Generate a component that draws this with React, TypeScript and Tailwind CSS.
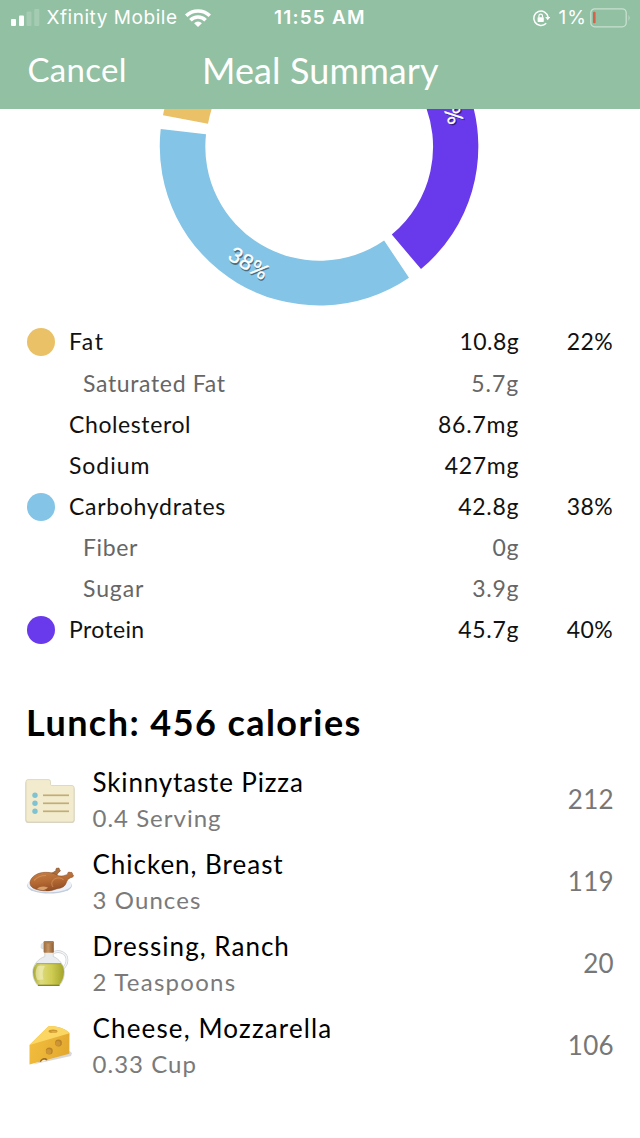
import React from "react";
import clsx from "clsx";

type Nutrient = {
  label: string;
  labelTracking: string;
  amount: string;
  amountTracking: string;
  percent?: string;
  dot?: string;
  sub?: boolean;
};

const nutrients: Nutrient[] = [
  { label: "Fat", labelTracking: "tracking-[1.5px]", amount: "10.8g", amountTracking: "tracking-[0.4px]", percent: "22%", dot: "bg-[#ebc168]" },
  { label: "Saturated Fat", labelTracking: "tracking-[0.65px]", amount: "5.7g", amountTracking: "tracking-[0.9px]", sub: true },
  { label: "Cholesterol", labelTracking: "tracking-[0.6px]", amount: "86.7mg", amountTracking: "tracking-[0.8px]" },
  { label: "Sodium", labelTracking: "tracking-[0.95px]", amount: "427mg", amountTracking: "tracking-[0.65px]" },
  { label: "Carbohydrates", labelTracking: "tracking-[0.7px]", amount: "42.8g", amountTracking: "tracking-[0.65px]", percent: "38%", dot: "bg-[#84c4e6]" },
  { label: "Fiber", labelTracking: "tracking-[0.65px]", amount: "0g", amountTracking: "tracking-[0.65px]", sub: true },
  { label: "Sugar", labelTracking: "tracking-[0.88px]", amount: "3.9g", amountTracking: "tracking-[0.65px]", sub: true },
  { label: "Protein", labelTracking: "tracking-[0.35px]", amount: "45.7g", amountTracking: "tracking-[0.65px]", percent: "40%", dot: "bg-[#693aeb]" },
];

function RecipeIcon() {
  return (
    <svg className="h-[82px] w-[60px] shrink-0" viewBox="0 0 60 82">
      <path d="M7.5 22h20a2 2 0 0 1 2 2v2.5q0 1.2 1.2 1.2h21.8a2 2 0 0 1 2 2v32a2 2 0 0 1-2 2h-45a2 2 0 0 1-2-2v-37.700a2 2 0 0 1 2-2z" fill="#bdb9a6" opacity=".8" />
      <path d="M8 20.600h20.500a2 2 0 0 1 2 2v2.700q0 1.200 1.200 1.200h20.300a2 2 0 0 1 2 2v32.500a2 2 0 0 1-2 2h-44a2 2 0 0 1-2-2v-38.400a2 2 0 0 1 2-2z" fill="#f2ebcd" stroke="#d9d2b5" strokeWidth=".8" />
      {[36.3, 44.3, 52.3].map((y) => (
        <g key={y}>
          <circle cx="15" cy={y} r="2.700" fill="#7fc3d2" />
          <path d={`M23 ${y}h26`} stroke="#c2ac78" strokeWidth="1.700" />
        </g>
      ))}
    </svg>
  );
}

function ChickenIcon() {
  return (
    <svg className="h-[82px] w-[60px] shrink-0" viewBox="0 0 60 82">
      <defs>
        <linearGradient id="roast" x1="0" y1="0" x2="0.3" y2="1">
          <stop offset="0" stopColor="#c58045" />
          <stop offset=".55" stopColor="#b56a33" />
          <stop offset="1" stopColor="#945026" />
        </linearGradient>
      </defs>
      <ellipse cx="29.500" cy="44.600" rx="22.500" ry="8" fill="#c3cddd" />
      <ellipse cx="29.500" cy="43.800" rx="22" ry="7.400" fill="#edf1f8" />
      <path d="M27 34c3-1.500 6-2 9-4.500c-.5-1.700.4-2.700 1.600-2.300c1-.6 2 0 1.800 1.200c1.300.5 1.300 2-.2 2.500c-1.600 1.200-2 3-4 5z" fill="#a9713f" stroke="#7b4521" strokeWidth=".5" />
      <path d="M10 42c0-5 5.500-9.500 12.500-10.500c8-.8 12 1.200 16 3.200c4 1 6.500-.6 9.200-1.300c-.5-2 1.200-3 2.400-1.900c1.500-.6 2.800.3 2.200 1.800c1.600.4 1.600 2.300 0 2.900c-2.300.5-4.800 1.800-5.800 4.800c-1.300 5-5 6-10 6.900c-4 1.600-7.500 2.300-12.500 1.900c-8-.6-14-2.900-14-7.800z" fill="url(#roast)" stroke="#83431d" strokeWidth=".5" />
      <path d="M33 46c-3-4 0-8.500 4.500-9c3-.2 5 .5 6 2" fill="none" stroke="#d3935a" strokeWidth=".8" />
      <path d="M14 39.500c3-3.500 7-5 12-5" fill="none" stroke="#dc9d61" strokeWidth="1.200" opacity=".6" />
      <path d="M17 48c3-3 7-3 11-1.500c-2 2.500-6 3.500-11 1.500z" fill="#d9a069" />
    </svg>
  );
}

function OilIcon() {
  return (
    <svg className="h-[82px] w-[60px] shrink-0" viewBox="0 0 60 82">
      <defs>
        <linearGradient id="oil" x1="0" y1="0" x2="1" y2="0">
          <stop offset="0" stopColor="#a4a52f" />
          <stop offset=".25" stopColor="#dedb80" />
          <stop offset=".6" stopColor="#cfcc52" />
          <stop offset="1" stopColor="#a3a42c" />
        </linearGradient>
        <linearGradient id="cork" x1="0" y1="0" x2="1" y2="0">
          <stop offset="0" stopColor="#9c6a3e" />
          <stop offset=".45" stopColor="#c49462" />
          <stop offset="1" stopColor="#8f5c34" />
        </linearGradient>
      </defs>
      <path d="M33.500 29.500c7-2.500 13.500 1 13.500 7.300c0 4-1.500 6.500-4 8.500" fill="none" stroke="#c9cdd2" strokeWidth="2.600" />
      <path d="M33.500 29.500c7-2.500 13.500 1 13.500 7.300c0 4-1.500 6.500-4 8.500" fill="none" stroke="#f3f5f7" strokeWidth="1.400" />
      <path d="M24.800 25.500v8c-6 2-12 8-12 15.500c0 6 2 10 5 13.500h21.500c3-3.500 5-7.500 5-13.500c0-7.500-6-13.500-11-15.500v-8z" fill="#e9edef" stroke="#c3c8ca" strokeWidth=".7" />
      <path d="M16.500 40.500h24.500c2 2.300 3 4.800 3 8.300c0 5.700-2 10-5 13.500h-21c-3-3.500-5-7.800-5-13.500c0-3.500 1.500-6 3.500-8.300z" fill="url(#oil)" />
      <path d="M16.500 40.700h24.500" stroke="#9da334" strokeWidth=".9" />
      <path d="M18 43c-3 4-3 9.500-.5 14l6-.5c-1.500-4.500-1-9.500 1.500-13.500z" fill="#f4f3c3" opacity=".55" />
      <path d="M18 62.300h21.500" stroke="#777c25" strokeWidth="1.200" />
      <path d="M21 25c.2-3-.4-4.500 2.200-4.500v5.500z" fill="#e4e7ea" stroke="#c4c8cc" strokeWidth=".5" />
      <rect x="23.600" y="18.300" width="10.200" height="11.500" rx="1" fill="url(#cork)" />
      <ellipse cx="28.700" cy="19.200" rx="5.100" ry="1.200" fill="#a87a4c" />
    </svg>
  );
}

function CheeseIcon() {
  return (
    <svg className="h-[82px] w-[60px] shrink-0" viewBox="0 0 60 82">
      <defs>
        <linearGradient id="rind" x1="0" y1="0" x2="1" y2="0.3">
          <stop offset="0" stopColor="#f3c040" />
          <stop offset="1" stopColor="#e4aa30" />
        </linearGradient>
      </defs>
      <path d="M13 59.500l38-8.500l1-3l-5-4z" fill="#c9c7c4" opacity=".7" />
      <path d="M9.500 40l18.700-18.500c8-.8 16 1.300 21.300 6.700l-.2 20.500l-39.800 10.800z" fill="url(#rind)" />
      <path d="M9.500 40l18.700-18.500c8-.8 16 1.300 21.300 6.700z" fill="#fbd662" />
      <ellipse cx="33" cy="26.300" rx="4.500" ry="1.800" fill="#c9952f" />
      <ellipse cx="34" cy="26.900" rx="3" ry="1" fill="#e0ad43" />
      <circle cx="38.500" cy="38" r="3.400" fill="#b98427" />
      <circle cx="37.900" cy="38.500" r="2.500" fill="#cd9536" />
      <circle cx="29.300" cy="46" r="3.500" fill="#b98427" />
      <circle cx="28.700" cy="46.500" r="2.600" fill="#cd9536" />
      <path d="M19.800 57c0-4 6.700-5.800 7.700-2.100l-1.600.6c-1.500-1.700-4-.6-4.600 1.200z" fill="#a06e22" />
      <path d="M21.300 57.200c.5-2.600 3.500-3.400 4.800-1.500z" fill="#f3eee4" />
    </svg>
  );
}

const foods = [
  { name: "Skinnytaste Pizza", nameClass: "tracking-[0.85px]", serving: "0.4 Serving", servingClass: "tracking-[1px]", calories: "212", Icon: RecipeIcon },
  { name: "Chicken, Breast", nameClass: "tracking-[0.98px]", serving: "3 Ounces", servingClass: "tracking-[1.1px]", calories: "119", Icon: ChickenIcon },
  { name: "Dressing, Ranch", nameClass: "tracking-[1.03px]", serving: "2 Teaspoons", servingClass: "tracking-[1.25px]", calories: "20", Icon: OilIcon },
  { name: "Cheese, Mozzarella", nameClass: "tracking-[1.14px]", serving: "0.33 Cup", servingClass: "tracking-[1.03px]", calories: "106", Icon: CheeseIcon },
];

function StatusBar() {
  return (
    <div className="grid h-[36px] grid-cols-[263px_92px_1fr] items-center pl-[11px] pr-[9px] font-[Inter,sans-serif] text-[19px] leading-[36px]">
      <div className="flex items-center">
        <svg className="h-[18px] w-[29px]" viewBox="0 0 29 18" fill="#fff">
          <rect x="0" y="10" width="5" height="7" rx="1" />
          <rect x="8" y="6.500" width="5" height="10.500" rx="1" />
          <rect x="15.500" y="2.500" width="5" height="14.500" rx="1" opacity=".18" />
          <rect x="23.300" y="0" width="5" height="17" rx="1" opacity=".18" />
        </svg>
        <span className="ml-[6.5px] whitespace-nowrap tracking-[0.54px]">Xfinity Mobile</span>
        <svg className="ml-[7.5px] h-[19px] w-[26px]" viewBox="0 0 26 19" fill="none" stroke="#fff" strokeWidth="3.500">
          <path d="M1.200 6.800a16.600 16.600 0 0 1 23.600 0" />
          <path d="M5.400 11.200a10.600 10.600 0 0 1 15.200 0" />
          <path d="M13 18l-3.900-3.700a5.300 5.300 0 0 1 7.800 0z" fill="#fff" stroke="none" />
        </svg>
      </div>
      <span className="whitespace-nowrap font-semibold tracking-[1.19px]">11:55 AM</span>
      <div className="flex items-center justify-end">
        <svg className="h-[18px] w-[18px]" viewBox="0 0 18 18" fill="none" stroke="#fff" strokeWidth="1.500">
          <path d="M14.200 14.200a7.200 7.200 0 1 1 1.900-6" />
          <path d="M13.200 8h5l-2.500 3.200z" fill="#fff" stroke="none" />
          <rect x="5.600" y="8.200" width="6.200" height="4.700" rx=".6" fill="#fff" stroke="none" />
          <path d="M6.900 8.500v-1.500a1.800 1.800 0 0 1 3.600 0v1.500" strokeWidth="1.200" />
        </svg>
        <span className="ml-[9px] tracking-[1px]">1%</span>
        <svg className="ml-[3px] h-[20px] w-[41px]" viewBox="0 0 41 20" fill="none">
          <rect x=".8" y=".8" width="35.400" height="18" rx="4" stroke="#fff" strokeWidth="1.300" opacity=".5" />
          <rect x="3" y="3.800" width="2.600" height="11.500" rx="1" fill="#d9604a" />
          <path d="M38.700 6.500q1.600 3.300 0 6.600z" fill="#fff" opacity=".6" />
        </svg>
      </div>
    </div>
  );
}

function MacroChart() {
  return (
    <svg className="block h-[212px] w-[640px]" viewBox="0 109 640 212">
      <path d="M160.700 129A159.300 159.300 0 0 0 409 277.700L384.100 240.500A114 114 0 0 1 206 134.300z" fill="#84c4e6" />
      <path d="M421 269.100A159.300 159.300 0 0 0 470.700 98L422.100 98A114 114 0 0 1 391.800 234.600z" fill="#693aeb" />
      <path d="M163 115.200A159.300 159.300 0 0 1 167.300 98L215.900 98A114 114 0 0 0 208 123.700z" fill="#ebc168" />
      <g className="font-[Lato,sans-serif] text-[21.5px]" textAnchor="middle">
        <g transform="translate(248.500 263.300) rotate(31)">
          <text x="1.500" y="8.700" fill="#3c5a6b" opacity=".8">38%</text>
          <text x="0" y="7.500" fill="#fff" stroke="#fff" strokeWidth=".3">38%</text>
        </g>
        <g transform="translate(449.700 103.500) rotate(71)">
          <text x="1.500" y="6.500" fill="#281660" opacity=".8">40%</text>
          <text x="0" y="7.500" fill="#fff" stroke="#fff" strokeWidth=".3">40%</text>
        </g>
      </g>
    </svg>
  );
}

export default function App() {
  return (
    <main className="flex h-[1138px] w-[640px] flex-col overflow-hidden bg-white font-[Lato,sans-serif] text-black">
      <header className="h-[109px] shrink-0 bg-[#92c0a3] text-white">
        <StatusBar />
        <div className="flex h-[68px] items-center">
          <button className="ml-[27.5px] w-[174.5px] pb-px text-left text-[33px] leading-[67px] tracking-[0.3px]">Cancel</button>
          <h1 className="whitespace-nowrap text-[36px] leading-[66px] tracking-[0.1px]">Meal Summary</h1>
        </div>
      </header>
      <MacroChart />
      <section className="flex flex-col pl-[27px] pr-[27px] text-[23px] leading-[41px]">
        {nutrients.map((n) => (
          <div key={n.label} className={clsx("flex h-[41px] items-center first:mb-px", n.sub ? "text-[#666]" : "text-[#111]")}>
            <span className={clsx("mr-[14px] size-[28px] rounded-full", n.dot)} />
            <span className={clsx("flex-1", n.labelTracking, n.sub && "pl-[14px]")}>{n.label}</span>
            <span className={n.amountTracking}>{n.amount}</span>
            <span className="w-[94px] text-right tracking-[0.4px]">{n.percent}</span>
          </div>
        ))}
      </section>
      <h2 className="mt-[50px] pl-[26px] text-[36px] font-bold leading-[44px] tracking-[1.44px]">
        Lunch: 456 calories
      </h2>
      <ul className="mt-[15px] flex flex-col">
        {foods.map(({ name, nameClass, serving, servingClass, calories, Icon }) => (
          <li key={name} className="flex h-[82px] items-center pl-[20px] pr-[26px]">
            <Icon />
            <div className="ml-[12.5px] flex flex-1 flex-col">
              <span className={clsx("text-[26px] leading-[36px]", nameClass)}>{name}</span>
              <span className={clsx("text-[24px] leading-[36px] text-[#7a7a7a]", servingClass)}>{serving}</span>
            </div>
            <span className="pb-[2px] text-[26px] tracking-[0.3px] text-[#777]">{calories}</span>
          </li>
        ))}
      </ul>
    </main>
  );
}
